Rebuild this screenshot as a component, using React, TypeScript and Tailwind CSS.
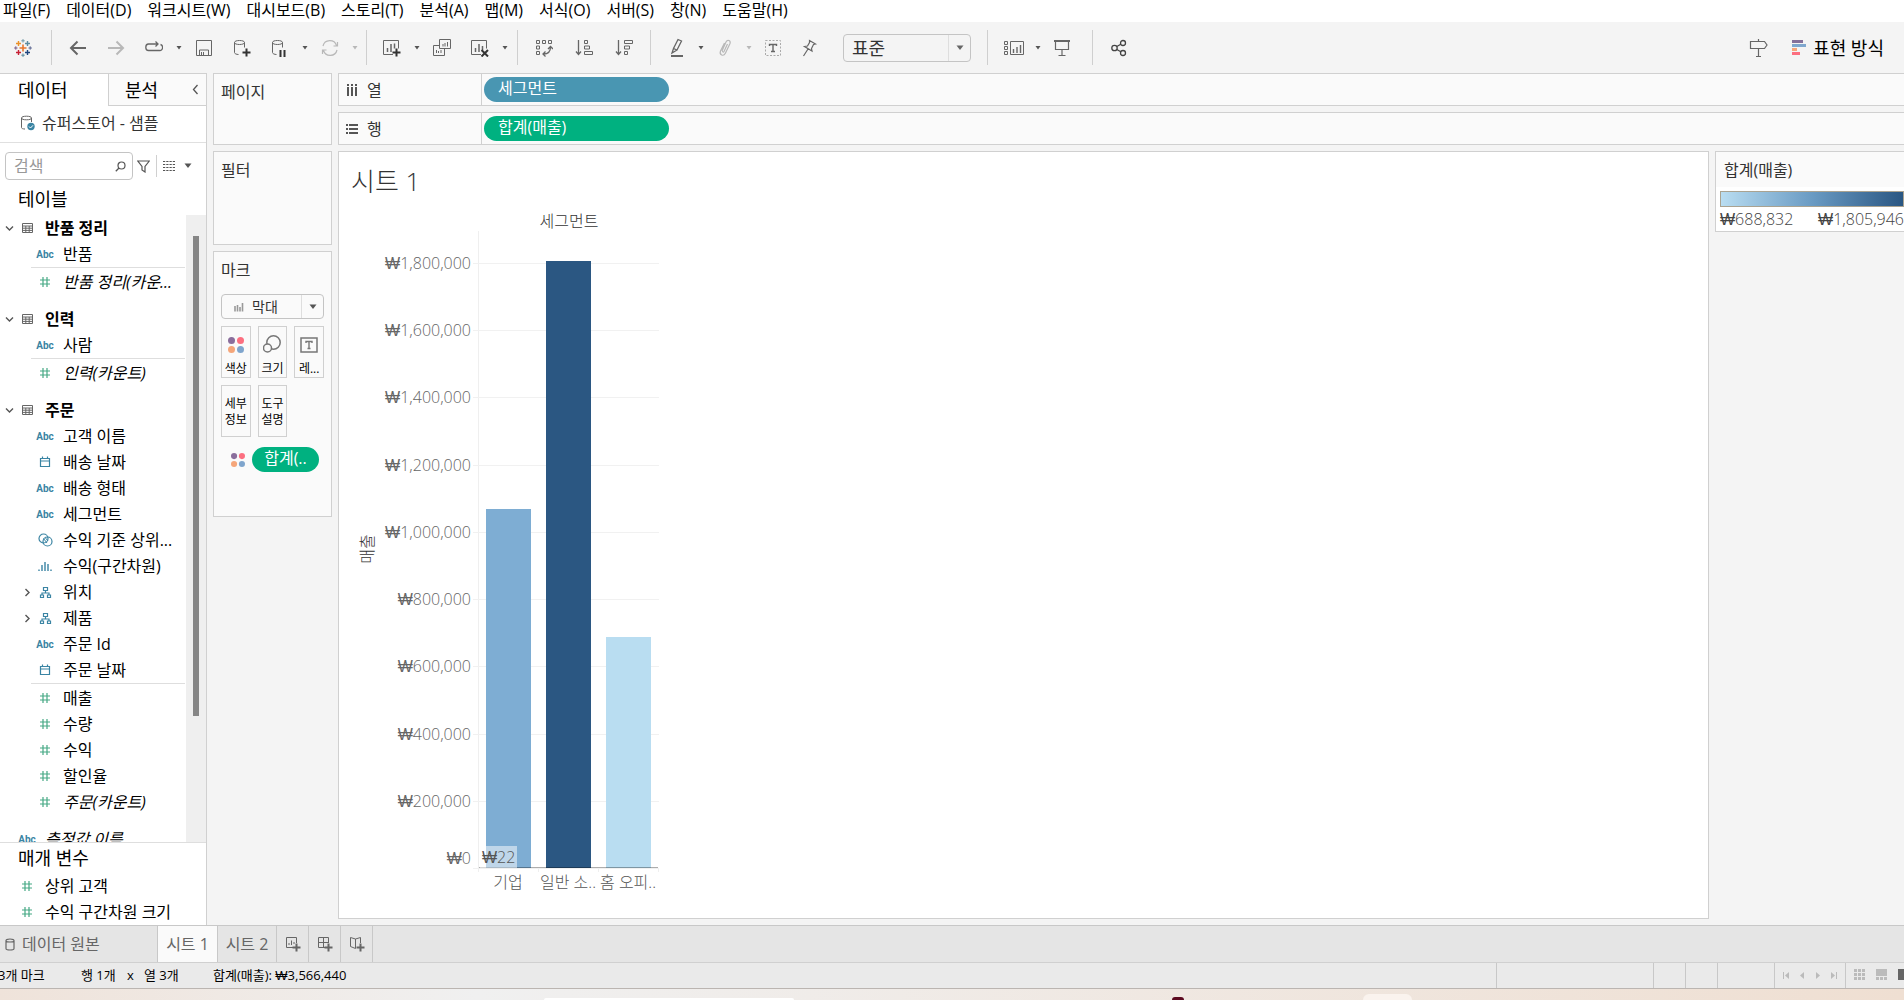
import type { ReactNode } from "react";

const menus = [
   "파일(F)",
   "데이터(D)",
   "워크시트(W)",
   "대시보드(B)",
   "스토리(T)",
   "분석(A)",
   "맵(M)",
   "서식(O)",
   "서버(S)",
   "창(N)",
   "도움말(H)",
];

type FieldType = "abc" | "number" | "date" | "set" | "bin" | "hierarchy";
type Field = { type: FieldType; name: string; italic?: boolean; split?: boolean };

const tables: { name: string; fields: Field[] }[] = [
   {
      name: "반품 정리",
      fields: [
         { type: "abc", name: "반품" },
         { type: "number", name: "반품 정리(카운...", italic: true, split: true },
      ],
   },
   {
      name: "인력",
      fields: [
         { type: "abc", name: "사람" },
         { type: "number", name: "인력(카운트)", italic: true, split: true },
      ],
   },
   {
      name: "주문",
      fields: [
         { type: "abc", name: "고객 이름" },
         { type: "date", name: "배송 날짜" },
         { type: "abc", name: "배송 형태" },
         { type: "abc", name: "세그먼트" },
         { type: "set", name: "수익 기준 상위..." },
         { type: "bin", name: "수익(구간차원)" },
         { type: "hierarchy", name: "위치" },
         { type: "hierarchy", name: "제품" },
         { type: "abc", name: "주문 Id" },
         { type: "date", name: "주문 날짜" },
         { type: "number", name: "매출", split: true },
         { type: "number", name: "수량" },
         { type: "number", name: "수익" },
         { type: "number", name: "할인율" },
         { type: "number", name: "주문(카운트)", italic: true },
      ],
   },
];

const bars = [
   { label: "기업", value: 1070000, fill: "#7eadd3" },
   { label: "일반 소..", value: 1805946, fill: "#2b5782" },
   { label: "홈 오피..", value: 688832, fill: "#b9ddf1" },
];

function Icon({ w = 18, h = 18, className, children }: { w?: number; h?: number; className?: string; children: ReactNode }) {
   return (
      <svg width={w} height={h} viewBox={`0 0 ${w} ${h}`} fill="none" stroke="currentColor" className={className} aria-hidden="true">
         {children}
      </svg>
   );
}

function CaretDown({ big }: { big?: boolean }) {
   return big ? (
      <Icon w={8} h={6}>
         <path d="M0.5 0.5h7L4 5z" fill="currentColor" stroke="none" />
      </Icon>
   ) : (
      <Icon w={6} h={4}>
         <path d="M0.5 0h5L3 3.5z" fill="currentColor" stroke="none" />
      </Icon>
   );
}

function Chevron({ open }: { open?: boolean }) {
   return (
      <Icon w={9} h={9}>
         <path d={open ? "M1 2.5l3.5 3.5L8 2.5" : "M2.5 1L6 4.5L2.5 8"} strokeWidth="1.4" />
      </Icon>
   );
}

function TableauLogo() {
   const crosses = [
      [9, 9, 3.5, "#e8762c", 1.6],
      [4.5, 4.5, 2.5, "#eb9129", 1.4],
      [13.5, 4.5, 2.5, "#5b8ba0", 1.4],
      [4.5, 13.5, 2.5, "#c72035", 1.4],
      [13.5, 13.5, 2.5, "#1f457e", 1.4],
      [9, 1.8, 1.7, "#7199a6", 1],
      [9, 16.2, 1.7, "#59879b", 1],
      [1.8, 9, 1.7, "#7b5d8a", 1],
      [16.2, 9, 1.7, "#5c6692", 1],
   ] as const;
   return (
      <Icon>
         {crosses.map(([x, y, r, color, width]) => (
            <path key={`${x}-${y}`} d={`M${x - r} ${y}h${r * 2}M${x} ${y - r}v${r * 2}`} stroke={color} strokeWidth={width} />
         ))}
      </Icon>
   );
}

const cylinder = "M1.5 3.5v10c0 1.2 2 2 4 2M11.5 3.5v5M1.5 3.5c0-1.3 2.2-2 5-2s5 .7 5 2s-2.2 2-5 2s-5-.7-5-2";
const plus = "M13.5 9.5v8M9.5 13.5h8";

function ColorDots({ size = 16 }: { size?: number }) {
   return (
      <svg width={size} height={size} viewBox="0 0 16 16" aria-hidden="true">
         <circle cx="3.5" cy="3.5" r="3.5" fill="#8a6e9c" />
         <circle cx="12.5" cy="3.5" r="3.5" fill="#fc6f80" />
         <circle cx="3.5" cy="12.5" r="3.5" fill="#f5a67a" />
         <circle cx="12.5" cy="12.5" r="3.5" fill="#7fa5cd" />
      </svg>
   );
}

function Tool({ label, wide, dim, children }: { label: string; wide?: boolean; dim?: boolean; children: ReactNode }) {
   return (
      <button
         type="button"
         aria-label={label}
         className={`flex h-8 shrink-0 items-center justify-center ${wide ? "w-[38px]" : "w-9"} ${dim ? "text-[#b8b8b8]" : "text-[#666]"}`}
      >
         {children}
      </button>
   );
}

function ToolCaret({ label, dim }: { label: string; dim?: boolean }) {
   return (
      <button type="button" aria-label={label} className={`flex h-8 w-3 shrink-0 items-center justify-center ${dim ? "text-[#b8b8b8]" : "text-[#555]"}`}>
         <CaretDown />
      </button>
   );
}

function Separator() {
   return <div className="h-[35px] w-px shrink-0 bg-[#cfcfcf]" />;
}

function Toolbar() {
   return (
      <div className="flex h-[51px] shrink-0 items-center bg-[#f4f4f4]">
         <button type="button" aria-label="시작 페이지" className="flex w-[51px] shrink-0 items-center pl-3.5">
            <TableauLogo />
         </button>
         <Separator />
         <div className="flex pl-[7px] pr-[5px]">
            <Tool label="실행 취소" wide>
               <Icon>
                  <path d="M17 9H2M8.5 2.5L2 9l6.5 6.5" strokeWidth="2" />
               </Icon>
            </Tool>
            <Tool label="다시 실행" wide dim>
               <Icon>
                  <path d="M1 9h15M9.5 2.5L16 9l-6.5 6.5" strokeWidth="2" />
               </Icon>
            </Tool>
            <Tool label="애니메이션 재생" wide>
               <Icon>
                  <path d="M7 5H3.5a2.500 3 0 0 0 0 6.500h11a2.500 3 0 0 0 1-6M7 5h5.500M10.500 2.500L13 5l-2.500 2.500" strokeWidth="1.300" />
               </Icon>
            </Tool>
            <ToolCaret label="재생 옵션" />
            <Tool label="저장" wide>
               <Icon w={16} h={16}>
                  <path d="M.5.5h15v15H.5zM3.500 15v-5h9v5M5.500 12v3M7.500 12v3" />
               </Icon>
            </Tool>
            <Tool label="새 데이터 원본" wide>
               <Icon>
                  <path d={cylinder} />
                  <path d={plus} stroke="#333" strokeWidth="2" />
               </Icon>
            </Tool>
            <Tool label="자동 업데이트 일시 중지" wide>
               <Icon>
                  <path d={cylinder} />
                  <path d="M9.500 11v7M13.500 11v7" stroke="#333" strokeWidth="2" />
               </Icon>
            </Tool>
            <ToolCaret label="업데이트 옵션" />
            <Tool label="업데이트 실행" wide dim>
               <Icon>
                  <path d="M2 7a7 7 0 0 1 13.500-.5M16 11a7 7 0 0 1-13.500.5M16.500 3v4h-4M1.500 15v-4h4" strokeWidth="1.200" />
               </Icon>
            </Tool>
            <ToolCaret label="실행 옵션" dim />
         </div>
         <Separator />
         <div className="flex px-1.5">
            <Tool label="새 워크시트" wide>
               <Icon>
                  <path d="M10 15.500H.5V1.500h15v8" />
                  <path d="M4.500 9v4M8 5v8M11.500 4.500v5" strokeWidth="1.500" />
                  <path d={plus} stroke="#333" strokeWidth="2" />
               </Icon>
            </Tool>
            <ToolCaret label="새로 만들기 옵션" />
            <Tool label="복제" wide>
               <Icon>
                  <path d="M6.500.5h11v9h-11zM6 6.500H.5v10h11V10M10 5v2.500M12 4v3.500M14.500 3v4.500M3.500 11v3M5.500 12v2M8 11v3" />
               </Icon>
            </Tool>
            <Tool label="시트 지우기" wide>
               <Icon>
                  <path d="M10 15.500H.5V1.500h15v8" />
                  <path d="M4.500 9v4M8 5v8M11.500 7v4" strokeWidth="1.500" />
                  <path d="M10.500 11l6.500 6.500M17 11l-6.500 6.500" stroke="#333" strokeWidth="2" />
               </Icon>
            </Tool>
            <ToolCaret label="지우기 옵션" />
         </div>
         <Separator />
         <div className="flex gap-1 px-2">
            <Tool label="행과 열 바꾸기">
               <Icon>
                  <path d="M1.500 1.500h3v3h-3zM7.500 1.500h3v3h-3zM13.500 1.500h3v3h-3zM1.500 7h3v3h-3zM1.500 12.500h3v3h-3z" />
                  <path d="M15.500 8c0 5-2.500 7-7 7M13 10l2.500-2.500L18 10M10.500 12.500L8 15l2.500 2.500" strokeWidth="1.300" />
               </Icon>
            </Tool>
            <Tool label="오름차순 정렬">
               <Icon>
                  <path d="M3.500 1v14M1 12.500L3.500 15.500L6 12.500" strokeWidth="1.300" />
                  <path d="M9.500 1.500h3v3h-3zM9.500 7h5v3h-5zM9.500 12.500h8v3h-8z" />
               </Icon>
            </Tool>
            <Tool label="내림차순 정렬">
               <Icon>
                  <path d="M3.500 1v14M1 12.500L3.500 15.500L6 12.500" strokeWidth="1.300" />
                  <path d="M9.500 1.500h8v3h-8zM9.500 7h5v3h-5zM9.500 12.500h3v3h-3z" />
               </Icon>
            </Tool>
         </div>
         <Separator />
         <div className="flex px-2">
            <Tool label="하이라이트">
               <Icon h={20}>
                  <path d="M10 1.500l3.500 1.500-4.500 9-3.500-1.500zM5.500 10.500l-1.500 4.500 5-3" strokeWidth="1.300" />
                  <path d="M3 18h12" strokeWidth="2" />
               </Icon>
            </Tool>
            <ToolCaret label="하이라이트 옵션" />
            <Tool label="멤버 그룹화" dim>
               <Icon>
                  <path d="M6 12l4-9c1.500-3 5-1.500 4 1.500l-4.500 9.500c-2 4-6.500 2-5-2l4-8M11.500 5L8 12.500c-.5 1-1.500.5-1.500-.5" strokeWidth="1.200" />
               </Icon>
            </Tool>
            <ToolCaret label="그룹 옵션" dim />
            <Tool label="마크 레이블 표시">
               <Icon>
                  <path d="M1.500 1.500h15v15h-15z" strokeDasharray="2 1.500" stroke="#aaa" />
                  <path d="M5.500 7V5.500h7V7M9 5.500v7M7 12.500h4" strokeWidth="1.400" />
               </Icon>
            </Tool>
            <Tool label="축 고정">
               <Icon>
                  <path d="M9.500 1.500l6 3.500-2 .5-2 4 .5 2.500-7.500-4.500 3-.5 2-3.500zM8 10l-4.500 7" strokeWidth="1.200" />
               </Icon>
            </Tool>
         </div>
         <div className="ml-2 flex h-7 w-32 shrink-0 items-center rounded-sm border border-[#c4c4c4] text-[#333]">
            <select aria-label="맞춤" className="h-full min-w-0 flex-1 appearance-none pl-2 text-lg leading-none">
               <option>표준</option>
            </select>
            <span className="flex h-full w-[22px] items-center justify-center border-l border-[#dedede] text-[#666]">
               <CaretDown big />
            </span>
         </div>
         <div className="w-4 shrink-0" />
         <Separator />
         <div className="flex px-2">
            <Tool label="카드 표시/숨기기">
               <Icon w={20} h={16}>
                  <path d="M.5 1.500h3v3h-3zM.5 6.500h3v3h-3zM.5 11.500h3v3h-3zM6.500 1.500h13v13h-13z" />
                  <path d="M9.500 9v4M13 7v6M16.500 5v8" strokeWidth="1.400" />
               </Icon>
            </Tool>
            <ToolCaret label="카드 옵션" />
            <Tool label="프레젠테이션 모드">
               <Icon>
                  <path d="M1 2h16" strokeWidth="2" />
                  <path d="M2.500 3v7.500h13V3M9 10.500v6M5.500 16.500h7" strokeWidth="1.200" />
               </Icon>
            </Tool>
         </div>
         <div className="w-1 shrink-0" />
         <Separator />
         <div className="px-2 text-[#444]">
            <button type="button" aria-label="공유" className="flex h-8 w-9 items-center justify-center">
               <Icon>
                  <circle cx="4.500" cy="9" r="2.700" strokeWidth="1.300" />
                  <circle cx="13" cy="4" r="2.500" strokeWidth="1.300" />
                  <circle cx="13" cy="14" r="2.500" strokeWidth="1.300" />
                  <path d="M6.800 7.500L10.800 5.200M6.800 10.500L10.800 12.800" strokeWidth="1.300" />
               </Icon>
            </button>
         </div>
         <div className="ml-auto flex items-center gap-6 pr-5">
            <button type="button" aria-label="데이터 가이드" className="text-[#666]">
               <Icon w={19} h={20}>
                  <path d="M9.500 1v2M9.500 10.500V18M7 18.500h5M1.500 3.500h14l2.500 3.500-2.500 3.500h-14z" strokeWidth="1.200" />
               </Icon>
            </button>
            <button type="button" className="flex items-center gap-[7px] text-lg text-black">
               <svg width="14" height="16" viewBox="0 0 14 16" className="shrink-0" aria-hidden="true">
                  <path d="M0 0h11v3H0z" fill="#85709a" />
                  <path d="M0 4h14v3H0z" fill="#7fa7ce" />
                  <path d="M0 8h5v3H0z" fill="#f5a67a" />
                  <path d="M0 12h8v3H0z" fill="#fc6f80" />
               </svg>
               표현 방식
            </button>
         </div>
      </div>
   );
}

function FieldIcon({ type }: { type: FieldType }) {
   if (type === "abc") {
      return <span className="font-[Roboto] text-[10px] font-bold text-[#3a84a3]">Abc</span>;
   }
   if (type === "number") {
      return (
         <Icon w={12} h={12} className="text-[#45a884]">
            <path d="M4 1v10M8 1v10M1 4h10M1 8h10" strokeWidth="1.200" />
         </Icon>
      );
   }
   if (type === "date") {
      return (
         <Icon w={12} h={12} className="text-[#3a84a3]">
            <path d="M1.500 2.500h9v8h-9zM1.500 5h9M3.500.5v2M8.500.5v2" strokeWidth="1.200" />
         </Icon>
      );
   }
   if (type === "set") {
      return (
         <Icon w={15} h={14} className="text-[#3a84a3]">
            <circle cx="5.500" cy="5.500" r="4.500" strokeWidth="1.200" />
            <circle cx="9.500" cy="8.500" r="4.500" strokeWidth="1.200" />
            <path d="M5.500 5.500L9 10M7.500 5L10 8" />
         </Icon>
      );
   }
   if (type === "bin") {
      return (
         <Icon w={14} h={12} className="text-[#3a84a3]">
            <path d="M1 9.500v1.500M4 5v6M7 2v9M10 4v7M13 9.500v1.500" strokeWidth="1.400" />
         </Icon>
      );
   }
   return (
      <Icon w={13} h={13} className="text-[#3a84a3]">
         <path d="M4.500 1.500h4v3h-4zM1.500 9h3v2.500h-3zM8.500 9h3v2.500h-3zM6.500 4.500V7M3 9V7h7v2" strokeWidth="1.200" />
      </Icon>
   );
}

function FieldRow({ field, nested = true }: { field: Field; nested?: boolean }) {
   return (
      <>
         {field.split && <li className="mb-px ml-[31px] mr-px h-px bg-[#dedede]" />}
         <li className={`flex h-[26px] items-center ${nested ? "pl-5" : "pl-0.5"}`}>
            <span className="flex w-[15px] shrink-0 justify-center text-[#555]">
               {field.type === "hierarchy" && (
                  <button type="button" aria-label={`${field.name} 펼치기`}>
                     <Chevron />
                  </button>
               )}
            </span>
            <span className="flex w-5 shrink-0 items-center justify-center">
               <FieldIcon type={field.type} />
            </span>
            <span className={`ml-2 whitespace-nowrap text-base leading-none ${field.italic ? "italic" : ""}`}>{field.name}</span>
         </li>
      </>
   );
}

function DataPane() {
   return (
      <aside className="flex w-[207px] shrink-0 flex-col border-r border-t border-[#d0d0d0] bg-white text-black">
         <div className="flex h-8 shrink-0 text-lg leading-none">
            <button type="button" className="w-[108px] pl-[18px] text-left">
               데이터
            </button>
            <button type="button" className="flex-1 border-b border-l border-[#d0d0d0] bg-[#fafafa] pl-4 text-left">
               분석
            </button>
            <button type="button" aria-label="창 최소화" className="flex w-[22px] items-center justify-center border-b border-[#d0d0d0] bg-[#fafafa] text-[#555]">
               <Icon w={7} h={11}>
                  <path d="M5.500 1L1.500 5.500l4 4.500" strokeWidth="1.300" />
               </Icon>
            </button>
         </div>
         <div className="flex h-[37px] shrink-0 items-center gap-[7px] border-b border-[#e0e0e0] pb-0.5 pl-5 text-[#333]">
            <Icon w={15} h={16} className="shrink-0 text-[#666]">
               <path d="M1.500 3v9.500c0 1 1.500 1.500 3.500 1.500M11.500 3v4M1.500 3c0-1.200 2.200-1.800 5-1.800s5 .6 5 1.800s-2.200 1.800-5 1.800s-5-.6-5-1.800" />
               <circle cx="11" cy="11.500" r="3.700" fill="#3a84a3" stroke="none" />
               <path d="M9 11.500l1.500 1.500 2.500-2.700" stroke="white" />
            </Icon>
            <span className="whitespace-nowrap text-base leading-none">슈퍼스토어 - 샘플</span>
         </div>
         <div className="mt-[9px] flex h-7 shrink-0 items-center pl-[5px] text-[#555]">
            <div className="flex h-full w-32 items-center rounded-sm border border-[#c4c4c4] pr-1.5">
               <input aria-label="검색" placeholder="검색" className="min-w-0 flex-1 pl-2 text-base leading-none outline-none placeholder:text-[#999]" />
               <Icon w={11} h={11}>
                  <circle cx="6.500" cy="4.500" r="3.500" strokeWidth="1.200" />
                  <path d="M4 7L.8 10.200" strokeWidth="1.300" />
               </Icon>
            </div>
            <button type="button" aria-label="필터" className="ml-1">
               <Icon w={13} h={13}>
                  <path d="M.8 1h11.500L8 6.500V12L5 10V6.500z" strokeWidth="1.200" />
               </Icon>
            </button>
            <span className="mx-1.5 h-[22px] w-px bg-[#d0d0d0]" />
            <button type="button" aria-label="보기" className="flex items-center gap-[9px]">
               <Icon w={12} h={10}>
                  <path d="M0 .5h12M0 3.500h12M0 6.500h12M0 9.500h12" strokeDasharray="2.250 1" />
               </Icon>
               <CaretDown big />
            </button>
         </div>
         <h2 className="flex h-[35px] shrink-0 items-center pl-[18px] pt-0.5 text-lg leading-none">테이블</h2>
         <div className="flex min-h-0 flex-1 overflow-hidden">
            <div className="min-h-0 flex-1">
               {tables.map((table) => (
                  <section key={table.name} className="mb-[11px]">
                     <h3 className="flex h-[26px] items-center pl-0.5 text-base font-bold leading-none">
                        <button type="button" aria-label={`${table.name} 접기`} className="flex w-[15px] justify-center text-[#555]">
                           <Chevron open />
                        </button>
                        <span className="flex w-5 justify-center text-[#666]">
                           <Icon w={11} h={10}>
                              <path d="M.5.5h10v9H.5zM.5 3h10M.5 5.200h10M.5 7.400h10M3.800 3v6.500M7.200 3v6.500" />
                           </Icon>
                        </span>
                        <span className="ml-2">{table.name}</span>
                     </h3>
                     <ul>
                        {table.fields.map((field) => (
                           <FieldRow key={field.name} field={field} />
                        ))}
                     </ul>
                  </section>
               ))}
               <ul>
                  <FieldRow nested={false} field={{ type: "abc", name: "측정값 이름", italic: true }} />
               </ul>
            </div>
            <div className="w-5 shrink-0 bg-[#efefef] pl-[7px] pt-[21px]">
               <div className="h-[480px] w-1.5 bg-[#868686]" />
            </div>
         </div>
         <div className="shrink-0 border-t border-[#dedede]">
            <h2 className="flex h-[30px] items-center pl-[18px] text-lg leading-none">매개 변수</h2>
            <ul>
               <FieldRow nested={false} field={{ type: "number", name: "상위 고객" }} />
               <FieldRow nested={false} field={{ type: "number", name: "수익 구간차원 크기" }} />
            </ul>
         </div>
      </aside>
   );
}

function MarkButton({ children }: { children: ReactNode }) {
   return (
      <button
         type="button"
         className="flex h-[52px] flex-col items-center justify-end gap-2 whitespace-nowrap border border-[#d0d0d0] bg-[#fafafa] text-xs leading-4 text-black"
      >
         {children}
      </button>
   );
}

function Cards() {
   return (
      <div className="flex w-[119px] shrink-0 flex-col gap-1.5 text-base text-[#333]">
         <section className="h-[72px] border border-[#d0d0d0] bg-[#fafafa] px-[7px] pt-1.5">
            <h2>페이지</h2>
         </section>
         <section className="h-[94px] border border-[#d0d0d0] bg-[#fafafa] px-[7px] pt-1.5">
            <h2>필터</h2>
         </section>
         <section className="h-[266px] border border-[#d0d0d0] bg-[#fafafa] px-[7px] pt-1.5">
            <h2>마크</h2>
            <div className="mt-3 flex h-[25px] items-center rounded-sm border border-[#c4c4c4]">
               <Icon w={10} h={10} className="ml-3 shrink-0 text-[#999]">
                  <path d="M1 4v5.500M3.500 3v6.500M6 5v4.500M8.500 1v8.500" strokeWidth="1.600" />
               </Icon>
               <select aria-label="마크 유형" className="h-full min-w-0 flex-1 appearance-none pl-2 text-sm leading-none">
                  <option>막대</option>
               </select>
               <span className="flex h-full w-[22px] items-center justify-center border-l border-[#dedede] text-[#555]">
                  <CaretDown big />
               </span>
            </div>
            <div className="mt-[7px] grid grid-cols-3 gap-[7px]">
               <MarkButton>
                  <ColorDots />
                  <span>색상</span>
               </MarkButton>
               <MarkButton>
                  <Icon h={18} className="text-[#777]">
                     <circle cx="10.500" cy="7.500" r="6.700" strokeWidth="1.500" />
                     <circle cx="4.500" cy="13" r="4" fill="#fafafa" strokeWidth="1.500" />
                  </Icon>
                  <span>크기</span>
               </MarkButton>
               <MarkButton>
                  <Icon h={16} className="text-[#777]">
                     <path d="M1 1h16v14H1z" strokeWidth="1.500" />
                     <path d="M6 6V4.500h6V6M9 4.500v7M7.500 11.500h3" strokeWidth="1.400" />
                  </Icon>
                  <span>레...</span>
               </MarkButton>
               <MarkButton>
                  <span className="pb-2">
                     세부
                     <br />
                     정보
                  </span>
               </MarkButton>
               <MarkButton>
                  <span className="pb-2">
                     도구
                     <br />
                     설명
                  </span>
               </MarkButton>
            </div>
            <div className="mt-2.5 flex items-center gap-[7px] pl-2.5">
               <ColorDots size={14} />
               <button type="button" className="flex h-[25px] w-[67px] items-center justify-center rounded-full bg-[#00b180] pb-1 text-base leading-none text-white">
                  합계(..
               </button>
            </div>
         </section>
      </div>
   );
}

function Shelf({ title, pill, color, icon }: { title: string; pill: string; color: string; icon: ReactNode }) {
   return (
      <section className="flex h-[33px] shrink-0 items-center border border-r-0 border-[#d0d0d0] bg-[#fafafa]">
         <h2 className="flex h-full w-[143px] shrink-0 items-center gap-[9px] border-r border-[#d0d0d0] pl-[7px] text-base leading-none text-[#333]">
            {icon}
            {title}
         </h2>
         <button type="button" className={`ml-0.5 flex h-[25px] w-[185px] items-center rounded-full pb-1 pl-3.5 text-base leading-none text-white ${color}`}>
            {pill}
         </button>
      </section>
   );
}

function Chart() {
   const zero = 668;
   const scale = 67.25 / 200000;
   const ticks = Array.from({ length: 10 }, (_, i) => i * 200000);
   return (
      <svg width="340" height="700" viewBox="0 0 340 700" className="block font-light" role="img" aria-label="세그먼트별 매출 막대 차트">
         <text x="230" y="27" textAnchor="middle" fontSize="16" fill="#333">
            세그먼트
         </text>
         <text transform="translate(34 349) rotate(-90)" textAnchor="middle" fontSize="16" fill="#333">
            매출
         </text>
         <g shapeRendering="crispEdges">
            <path d="M139.500 31v641M199.500 669v3M259.500 669v3M319.500 669v3" stroke="#efefef" />
            {ticks.map((tick) => (
               <path key={tick} d={`M134 ${Math.round(zero - tick * scale)}.5h186`} stroke="#f1f1f1" />
            ))}
            {bars.map((bar, i) => {
               const height = Math.floor(bar.value * scale);
               return <rect key={bar.label} x={147 + i * 60} y={zero - height} width="45" height={height} fill={bar.fill} />;
            })}
            <path d="M140 667.500h179" stroke="#000" strokeOpacity="0.32" />
            <rect x="141" y="646" width="37" height="22" fill="#fff" fillOpacity="0.5" />
         </g>
         <g fontSize="16" fill="#666" textAnchor="end">
            {ticks.map((tick) => (
               <text key={tick} x="132" y={tick === 0 ? 664 : Math.round(zero - tick * scale) + 6}>
                  <tspan className="font-['Liberation_Sans']">₩</tspan>
                  {tick.toLocaleString("en-US")}
               </text>
            ))}
         </g>
         <text x="143" y="663" fontSize="16" fill="#555">
            <tspan className="font-['Liberation_Sans']">₩</tspan>22
         </text>
         <g fontSize="16" fill="#555" textAnchor="middle">
            {bars.map((bar, i) => (
               <text key={bar.label} x={169 + i * 60} y="688">
                  {bar.label}
               </text>
            ))}
         </g>
      </svg>
   );
}

function Won({ children }: { children: string }) {
   return (
      <span>
         <span className="font-['Liberation_Sans']">₩</span>
         {children}
      </span>
   );
}

function SheetTabs() {
   return (
      <nav className="flex h-[37px] shrink-0 border-t border-[#c8c8c8] bg-[#e5e5e5] text-base text-[#666]">
         <button type="button" className="flex w-[158px] items-center gap-[7px] border-r border-[#c8c8c8] pl-[5px]">
            <Icon w={10} h={13}>
               <path d="M1 2.500v8c0 2 8 2 8 0v-8c0-2-8-2-8 0c0 2 8 2 8 0" strokeWidth="1.200" />
            </Icon>
            데이터 원본
         </button>
         <button type="button" aria-current="page" className="w-[60px] border-r border-[#c8c8c8] bg-[#fafafa]">
            시트 1
         </button>
         <button type="button" className="w-[59px] border-r border-[#c8c8c8]">
            시트 2
         </button>
         <button type="button" aria-label="새 워크시트" className="flex w-8 items-center justify-center border-r border-[#c8c8c8]">
            <Icon w={16} h={16}>
               <path d="M8 11.500H1.500v-10h10V7M4 7v2M6.500 4.500V9M9 6v2" />
               <path d="M11.500 7.500v8M7.500 11.500h8" strokeWidth="2" />
            </Icon>
         </button>
         <button type="button" aria-label="새 대시보드" className="flex w-8 items-center justify-center border-r border-[#c8c8c8]">
            <Icon w={16} h={16}>
               <path d="M8 11.500H1.500v-10h10V7M6.500 1.500v10M1.500 6.500h10" />
               <path d="M11.500 7.500v8M7.500 11.500h8" strokeWidth="2" />
            </Icon>
         </button>
         <button type="button" aria-label="새 스토리" className="flex w-8 items-center justify-center border-r border-[#c8c8c8]">
            <Icon w={16} h={16}>
               <path d="M6.500 3L1.500 1.500v9l5 2zM6.500 3l5-1.500V7" />
               <path d="M11.500 7.500v8M7.500 11.500h8" strokeWidth="2" />
            </Icon>
         </button>
      </nav>
   );
}

function StatusBar() {
   return (
      <footer className="flex h-[27px] shrink-0 overflow-hidden border-b border-t border-b-[#bbb5b1] border-t-[#d0d0d0] bg-[#eaeaea] text-[13px] text-black">
         <div className="-ml-0.5 flex items-center whitespace-pre">
            <span className="w-[83px]">3개 마크</span>
            <span className="w-[46px]">행 1개</span>
            <span className="w-[17px]">x</span>
            <span className="w-[69px]">열 3개</span>
            <span>
               합계(매출): <Won>3,566,440</Won>
            </span>
         </div>
         <div className="ml-auto flex text-[#bbb]">
            <div className="w-[157px] border-l border-[#c8c8c8]" />
            <div className="w-8 border-l border-[#c8c8c8]" />
            <div className="w-8 border-l border-[#c8c8c8]" />
            <div className="w-[57px] border-l border-[#c8c8c8]" />
            <div className="flex w-[71px] items-center justify-center gap-2.5 border-l border-[#c8c8c8]">
               <button type="button" aria-label="처음">
                  <Icon w={6} h={7}>
                     <path d="M6 0v7L2 3.500zM0 0h1v7H0z" fill="currentColor" stroke="none" />
                  </Icon>
               </button>
               <button type="button" aria-label="이전">
                  <Icon w={6} h={7}>
                     <path d="M5 0v7L1 3.500z" fill="currentColor" stroke="none" />
                  </Icon>
               </button>
               <button type="button" aria-label="다음">
                  <Icon w={6} h={7}>
                     <path d="M1 0v7l4-3.500z" fill="currentColor" stroke="none" />
                  </Icon>
               </button>
               <button type="button" aria-label="마지막">
                  <Icon w={6} h={7}>
                     <path d="M0 0v7l4-3.500zM5 0h1v7H5z" fill="currentColor" stroke="none" />
                  </Icon>
               </button>
            </div>
            <div className="flex w-[59px] items-center gap-[11px] overflow-hidden border-l border-[#c8c8c8] pb-0.5 pl-2">
               <button type="button" aria-label="시트 정렬기" className="shrink-0">
                  <Icon w={11} h={11}>
                     <path d="M0 1.500h11M0 5.500h11M0 9.500h11" strokeWidth="3" strokeDasharray="3 1" />
                  </Icon>
               </button>
               <button type="button" aria-label="필름 보기" className="shrink-0">
                  <Icon w={11} h={11}>
                     <path d="M0 0h11v7H0zM0 8h3v3H0zM4 8h3v3H4zM8 8h3v3H8z" fill="currentColor" stroke="none" />
                  </Icon>
               </button>
               <button type="button" aria-label="탭 보기" className="h-[11px] w-[11px] shrink-0 bg-[#666]" />
            </div>
         </div>
      </footer>
   );
}

export default function App() {
   return (
      <div className="flex h-screen flex-col overflow-hidden bg-[#f4f4f4] font-['Open_Sans','Noto_Sans_CJK_KR',sans-serif]">
         <nav className="flex h-[22px] shrink-0 items-center gap-4 bg-white pb-0.5 pl-[3px] text-base leading-5 text-black">
            {menus.map((menu) => (
               <button key={menu} type="button" className="whitespace-nowrap">
                  {menu}
               </button>
            ))}
         </nav>
         <Toolbar />
         <main className="flex min-h-0 flex-1 gap-1.5">
            <DataPane />
            <Cards />
            <div className="flex min-w-0 flex-1 flex-col gap-1.5 pb-1.5">
               <Shelf
                  title="열"
                  pill="세그먼트"
                  color="bg-[#4996b2]"
                  icon={
                     <Icon w={12} h={12}>
                        <path d="M2 0v2M6 0v2M10 0v2M2 3v9M6 3v9M10 3v9" stroke="#555" strokeWidth="2" />
                     </Icon>
                  }
               />
               <Shelf
                  title="행"
                  pill="합계(매출)"
                  color="bg-[#00b180]"
                  icon={
                     <Icon w={12} h={12}>
                        <path d="M0 2h2M0 6h2M0 10h2M3 2h9M3 6h9M3 10h9" stroke="#555" strokeWidth="2" />
                     </Icon>
                  }
               />
               <div className="flex min-h-0 flex-1 items-stretch gap-1.5">
                  <section className="min-w-0 flex-1 overflow-hidden border border-[#d0d0d0] bg-white">
                     <h1 className="flex h-12 items-center pl-3 pt-2.5 text-[26px] font-light leading-none text-[#333]">시트 1</h1>
                     <Chart />
                  </section>
                  <aside className="w-[189px] shrink-0">
                     <div className="border border-r-0 border-[#d0d0d0] bg-white text-[#333]">
                        <h2 className="flex h-[35px] items-center bg-[#fafafa] pl-2 text-base">합계(매출)</h2>
                        <div className="ml-1 mt-1 h-4 border border-[#aaa391] bg-linear-to-r from-[#b9ddf1] via-[#6a9bc3] to-[#2a5783]" />
                        <div className="ml-1 flex h-6 items-center justify-between text-base font-light text-[#444]">
                           <Won>688,832</Won>
                           <Won>1,805,946</Won>
                        </div>
                     </div>
                  </aside>
               </div>
            </div>
         </main>
         <SheetTabs />
         <StatusBar />
         <div className="flex h-[11px] shrink-0 items-end overflow-hidden bg-linear-to-r from-[#efe3da] via-[#f0f0f0] via-25% to-[#efdfd2]">
            <div className="ml-[544px] h-0.5 w-[250px] rounded-t-lg bg-white" />
            <div className="ml-[378px] h-[3px] w-3 rounded-t-full bg-[#5c0a20]" />
            <div className="ml-[179px] h-1.5 w-[49px] rounded-t-md bg-[#faf3ee]" />
         </div>
      </div>
   );
}
